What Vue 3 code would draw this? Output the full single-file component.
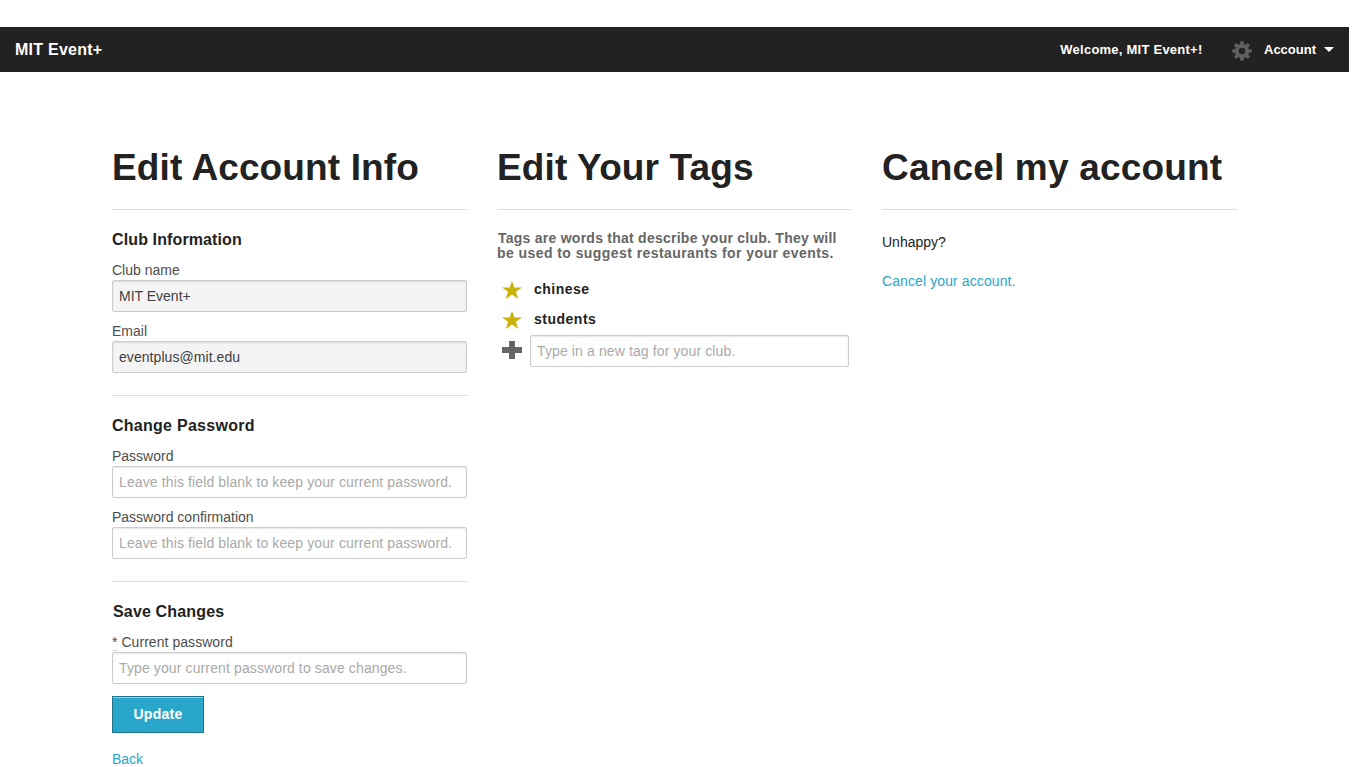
<script setup>
const tags = ['chinese', 'students']
</script>

<template>
  <div class="page">
    <nav class="bar">
      <a class="brand">MIT Event+</a>
      <div class="menu">
        <span class="welcome">Welcome, MIT Event+!</span>
        <svg class="gear" viewBox="-10 -10 20 20" width="20" height="20">
          <circle r="5.2" fill="none" stroke="#606060" stroke-width="3.8" />
          <path
            v-for="n in 8"
            :key="n"
            d="M-2 -6.3L-1.6 -9.8H1.6L2 -6.3Z"
            fill="#606060"
            :transform="`rotate(${n * 45})`"
          />
        </svg>
        <span class="account">Account</span>
        <i class="caret"></i>
      </div>
    </nav>

    <main class="columns">
      <section>
        <h1>Edit Account Info</h1>
        <hr />
        <h5 class="club">Club Information</h5>
        <label>Club name</label>
        <input class="field disabled" readonly value="MIT Event+" />
        <label>Email</label>
        <input class="field disabled email" readonly value="eventplus@mit.edu" />
        <hr class="divider" />
        <h5>Change Password</h5>
        <label>Password</label>
        <input class="field" type="password" placeholder="Leave this field blank to keep your current password." />
        <label>Password confirmation</label>
        <input class="field" type="password" placeholder="Leave this field blank to keep your current password." />
        <hr class="divider" />
        <h5 class="save">Save Changes</h5>
        <label class="current"><abbr>*</abbr> Current password</label>
        <input class="field" type="password" placeholder="Type your current password to save changes." />
        <button class="update">Update</button>
        <a class="link">Back</a>
      </section>

      <section>
        <h1>Edit Your Tags</h1>
        <hr />
        <h6>
          <span class="line-one">Tags are words that describe your club. They will</span>
          <span class="line-two">be used to suggest restaurants for your events.</span>
        </h6>
        <div v-for="tag in tags" :key="tag" class="tag">
          <svg viewBox="0 0 20 20" width="20" height="20">
            <path d="M10 1L12.3 7.5H20L13.9 11.7L16.3 19L10 14.6L3.7 19L6.1 11.7L0 7.5H7.7Z" fill="#c8b108" />
          </svg>
          <strong>{{ tag }}</strong>
        </div>
        <div class="new-tag">
          <svg viewBox="0 0 20 20" width="20" height="20">
            <path d="M7 1H13V7H20V13H13V19H7V13H0V7H7Z" fill="#666" />
          </svg>
          <input class="field" placeholder="Type in a new tag for your club." />
        </div>
      </section>

      <section>
        <h1 class="cancel-title">Cancel my account</h1>
        <hr />
        <p class="unhappy">Unhappy?</p>
        <a class="link cancel">Cancel your account.</a>
      </section>
    </main>
  </div>
</template>

<style>
body {
  background: #fff;
  overflow: hidden;
}
</style>

<style scoped>
.page {
  width: 1349px;
  height: 767px;
  padding-top: 27px;
  box-sizing: border-box;
  overflow: hidden;
  font-family: "Liberation Sans", Arial, sans-serif;
  font-size: 14px;
  color: #222;
}
.bar {
  height: 45px;
  padding: 0 15px;
  background: #222;
  color: #fff;
  font-weight: bold;
  display: flex;
  align-items: center;
  justify-content: space-between;
}
.brand {
  font-size: 16px;
  letter-spacing: 0.25px;
}
.menu {
  display: flex;
  align-items: center;
  font-size: 13px;
}
.welcome {
  letter-spacing: 0.24px;
}
.gear {
  margin: 3px 12px 0 29.5px;
}
.caret {
  border: 5px solid transparent;
  border-top-color: #fff;
  border-bottom: 0;
  margin-left: 8px;
}
.columns {
  display: grid;
  grid-template-columns: repeat(3, 355px);
  gap: 30px;
  padding: 72px 0 0 112px;
}
h1 {
  margin: 0 0 -2px;
  font-size: 37px;
  line-height: 48px;
  letter-spacing: 0.12px;
  white-space: nowrap;
}
.cancel-title {
  letter-spacing: 0.18px;
}
hr {
  border: 0;
  border-top: 1px solid #ddd;
  margin: 19px 0 20px;
}
h1 + hr {
  margin-top: 0;
  position: relative;
}
h1 {
  padding-bottom: 19px;
}
.divider {
  margin: 22px 0 20px;
}
h5 {
  margin: 0 0 11px;
  font-size: 16px;
  line-height: 19px;
  letter-spacing: 0.27px;
}
.club {
  letter-spacing: 0.12px;
}
.save {
  padding-left: 1px;
  letter-spacing: 0.16px;
}
label {
  display: block;
  color: #4d4d4d;
  line-height: 20px;
}
.current {
  letter-spacing: 0.05px;
}
abbr {
  border-bottom: 1px solid #ddd;
}
.field {
  display: block;
  width: 100%;
  height: 32px;
  box-sizing: border-box;
  margin: 0 0 9px;
  padding: 6px;
  border: 1px solid #ccc;
  border-radius: 2px;
  box-shadow: inset 0 1px 2px rgba(0, 0, 0, 0.1);
  background: #fff;
  color: #404040;
  font-family: inherit;
  font-size: 14px;
  outline: 0;
}
.field::placeholder {
  color: #a9a9a9;
  opacity: 1;
  letter-spacing: 0.12px;
}
.disabled {
  background: #f4f4f4;
}
.email {
  letter-spacing: 0.06px;
}
.update {
  display: block;
  width: 92px;
  height: 37px;
  margin: 12px 0 16px;
  padding: 0 0 2px;
  border: 1px solid #1e728c;
  background: #2ba6cb;
  box-shadow: inset 0 1px 0 rgba(255, 255, 255, 0.5);
  color: #fff;
  font-family: inherit;
  font-size: 14px;
  font-weight: bold;
  letter-spacing: 0.3px;
}
.link {
  display: block;
  color: #2ba6cb;
  line-height: 20px;
}
.cancel {
  letter-spacing: 0.1px;
}
h6 {
  margin: 0 0 14px;
  padding-top: 1px;
  font-size: 14px;
  line-height: 15px;
  color: #666;
  white-space: nowrap;
}
h6 span {
  display: block;
}
.line-one {
  padding-left: 1px;
  letter-spacing: 0.25px;
}
.line-two {
  letter-spacing: 0.43px;
}
.tag {
  height: 30px;
  display: flex;
  align-items: center;
  gap: 12px;
  padding-left: 5px;
}
.tag strong {
  line-height: 18px;
  margin-bottom: 2px;
  letter-spacing: 0.5px;
}
.new-tag {
  display: flex;
  align-items: center;
  gap: 8px;
  padding-left: 5px;
}
.new-tag svg {
  margin-bottom: 2px;
}
.new-tag .field {
  width: 319px;
  margin: 0;
}
.unhappy {
  margin: 0 0 19px;
  padding-top: 2px;
  line-height: 20px;
}
</style>
